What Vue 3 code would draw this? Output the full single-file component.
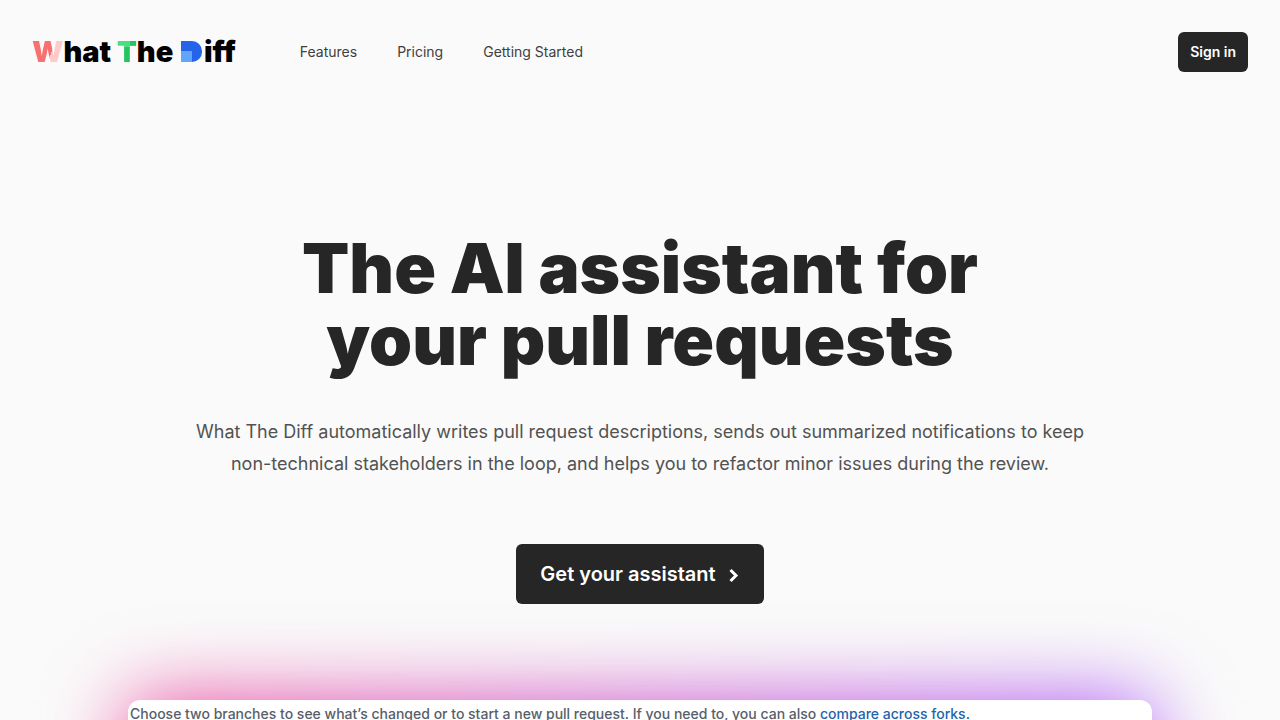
<script setup>
const links = [
  { label: 'Features', href: '#features' },
  { label: 'Pricing', href: '#pricing' },
  { label: 'Getting Started', href: '#getting-started' }
]
</script>

<template>
  <div class="page">
    <header class="bar">
      <a class="logo" href="#"><span class="w">W</span>hat <span class="t">T</span>he <span class="d">D</span>iff</a>
      <nav class="nav">
        <a v-for="link in links" :key="link.label" :href="link.href">{{ link.label }}</a>
      </nav>
      <a class="signin" href="#login">Sign in</a>
    </header>

    <main>
      <section class="hero">
        <h1>The AI assistant for<br />your pull requests</h1>
        <p>
          What The Diff automatically writes pull request descriptions, sends out summarized notifications to keep
          non-technical stakeholders in the loop, and helps you to refactor minor issues during the review.
        </p>
        <a class="cta" href="#register">
          Get your assistant
          <svg viewBox="0 0 12 20" width="12" height="20" aria-hidden="true">
            <path d="M2.500 6l5.500 5.500-5.500 5.500" fill="none" stroke="currentColor" stroke-width="3" />
          </svg>
        </a>
      </section>

      <section class="demo">
        <div class="card">
          Choose two branches to see what’s changed or to start a new pull request. If you need to, you can also
          <a href="#forks">compare across forks.</a>
        </div>
      </section>
    </main>
  </div>
</template>

<style>
body {
  background: #fafafa;
}
</style>

<style scoped>
.page {
  height: 100vh;
  overflow: hidden;
  background: #fafafa;
  color: #262626;
  font-family: Inter, "Liberation Sans", sans-serif;
}

a {
  color: inherit;
  text-decoration: none;
}

.bar {
  display: flex;
  align-items: center;
  padding: 32px;
}

.logo {
  color: #000;
  font-size: 29px;
  font-weight: 900;
  line-height: 40px;
  white-space: nowrap;
}

.w,
.t {
  color: transparent;
  -webkit-background-clip: text;
  background-clip: text;
}

.w {
  background-image: linear-gradient(108deg, #f87171 60%, #fecaca 60%);
}

.t {
  background-image:
    linear-gradient(#22c55e, #22c55e),
    linear-gradient(#4ade80 38%, #22c55e 38%);
  background-repeat: no-repeat;
  background-position: right top, left top;
  background-size: 34% 38%, 100% 100%;
}

.d {
  display: inline-block;
  width: 21px;
  height: 21px;
  margin: 0 2px;
  line-height: 21px;
  color: transparent;
  border-radius: 0 10px 10px 0;
  background: linear-gradient(#60a5fa, #60a5fa) left bottom / 11px 11px no-repeat #2563eb;
}

.nav {
  display: flex;
  gap: 40px;
  margin-left: 64px;
  color: #404040;
  font-size: 14px;
  line-height: 20px;
}

.signin {
  margin-left: auto;
  padding: 0 12px;
  border-radius: 6px;
  background: #262626;
  color: #fff;
  font-size: 14px;
  font-weight: 600;
  line-height: 40px;
}

.hero {
  display: flex;
  flex-direction: column;
  align-items: center;
  padding: 128px 32px 96px;
  text-align: center;
}

h1 {
  margin: 0;
  font-size: 69px;
  font-weight: 900;
  line-height: 72px;
}

p {
  max-width: 896px;
  margin: 40px 0 64px;
  color: #525252;
  font-size: 18px;
  line-height: 32px;
}

.cta {
  display: flex;
  align-items: center;
  gap: 12px;
  padding: 0 24px;
  border-radius: 6px;
  background: #262626;
  color: #fff;
  font-size: 20px;
  font-weight: 600;
  line-height: 60px;
}

.demo {
  position: relative;
  margin: 0 10%;
}

.demo::before {
  content: "";
  position: absolute;
  inset: 0;
  background: linear-gradient(90deg, #ec4899, #a855f7);
  filter: blur(40px);
}

.card {
  position: relative;
  min-height: 600px;
  padding: 2px;
  border-radius: 12px;
  background: #fff;
  color: #57606a;
  font-size: 14px;
  font-weight: 500;
  line-height: 24px;
}

.card a {
  color: #2563ab;
}
</style>
